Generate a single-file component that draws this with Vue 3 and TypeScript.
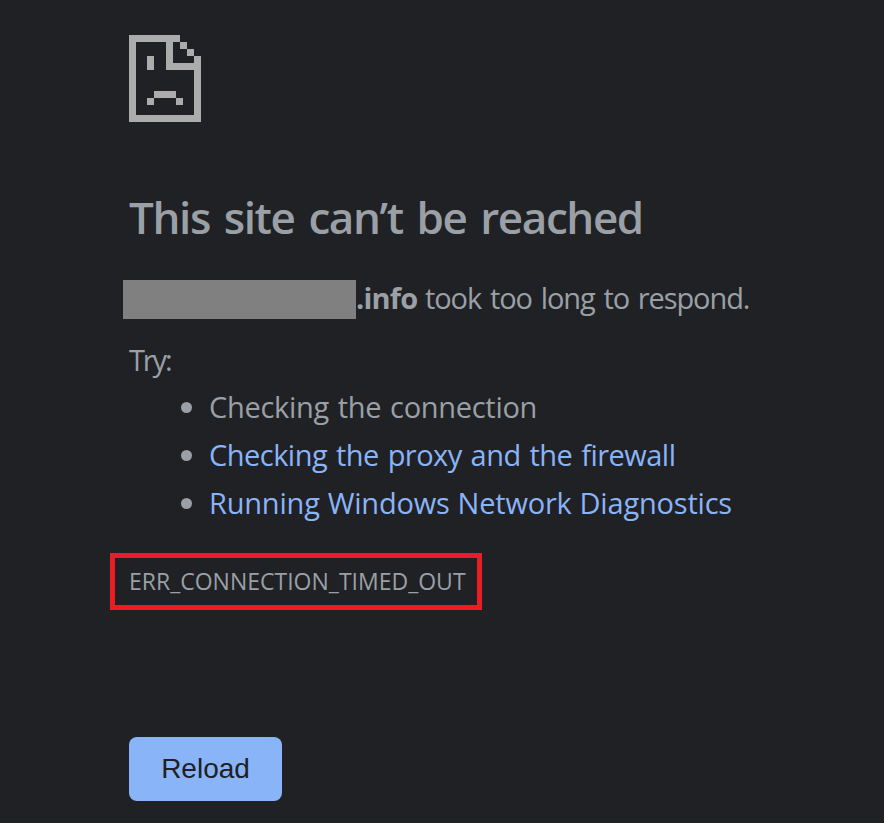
<script setup lang="ts">
interface Suggestion {
  text: string
  link: boolean
  size: string
}

const suggestions: Suggestion[] = [
  { text: 'Checking the connection', link: false, size: 'connection' },
  { text: 'Checking the proxy and the firewall', link: true, size: 'proxy' },
  { text: 'Running Windows Network Diagnostics', link: true, size: 'diagnostics' },
]

const reload = (): void => window.location.reload()
</script>

<template>
  <main class="page">
    <svg class="sad-file" width="72" height="87" viewBox="0 0 72 87" shape-rendering="crispEdges" aria-hidden="true">
      <path
        fill="#acacac"
        d="M0 0H51V7H44V28H65V21H72V87H0ZM7 7V80H65V35H37V7ZM51 7H58V14H51ZM58 14H65V21H58ZM18 21H25V35H18ZM25 56H47V63H25ZM18 63H25V70H18ZM47 63H54V70H47Z"
      />
    </svg>
    <h1 class="title">This site can’t be reached</h1>
    <p class="summary">
      <span class="redacted"></span><strong class="host">.info</strong><span class="reason">took too long to respond.</span>
    </p>
    <p class="try">Try:</p>
    <ul class="suggestions">
      <li v-for="item in suggestions" :key="item.text">
        <a v-if="item.link" href="#" :class="item.size">{{ item.text }}</a>
        <span v-else :class="item.size">{{ item.text }}</span>
      </li>
    </ul>
    <div class="error-code"><span>ERR_CONNECTION_TIMED_OUT</span></div>
    <button class="reload" type="button" @click="reload">Reload</button>
  </main>
</template>

<style>
body {
  margin: 0;
  background: #202124;
}
</style>

<style scoped>
.page {
  box-sizing: border-box;
  width: 884px;
  height: 823px;
  padding: 35px 0 0 129px;
  overflow: hidden;
  display: flex;
  flex-direction: column;
  align-items: flex-start;
  background: #202124;
  color: #9aa0a6;
  font-family: 'Open Sans', 'Noto Sans', sans-serif;
  font-size: 29px;
  white-space: nowrap;
}
.sad-file {
  display: block;
  flex: none;
}
.title {
  margin: 65px 0 0;
  height: 60px;
  line-height: 60px;
  font-size: 44px;
  font-weight: 600;
  letter-spacing: -1.4px;
  word-spacing: 3.8px;
}
.summary {
  display: flex;
  margin: 33px 0 0 -6px;
  height: 39px;
  line-height: 36px;
}
.redacted {
  width: 233px;
  height: 39px;
  background: #808080;
}
.host {
  width: 69px;
  font-weight: 700;
  letter-spacing: -0.8px;
}
.reason {
  letter-spacing: -1.1px;
  word-spacing: 2.4px;
}
.try {
  margin: 21px 0 0;
  height: 40px;
  line-height: 40px;
  letter-spacing: -2.1px;
}
.suggestions {
  margin: 3px 0 0;
  padding: 0;
  list-style: none;
}
.suggestions li {
  display: flex;
  align-items: center;
  height: 48px;
  line-height: 48px;
  padding-left: 52px;
}
.suggestions li::before {
  content: '';
  width: 11px;
  height: 11px;
  margin-right: 17px;
  border-radius: 50%;
  background: #9aa0a6;
}
.suggestions a {
  color: #8ab4f8;
  text-decoration: none;
}
.connection {
  letter-spacing: -0.3px;
  word-spacing: 1.6px;
}
.suggestions .proxy {
  letter-spacing: -0.52px;
  word-spacing: 1.8px;
}
.suggestions .diagnostics {
  letter-spacing: -0.2px;
  word-spacing: 0.6px;
}
.error-code {
  box-sizing: border-box;
  width: 372px;
  height: 57px;
  margin: 26px 0 0 -19px;
  padding-left: 14px;
  border: 5px solid #ed1c24;
  line-height: 46px;
  font-size: 23px;
}
.reload {
  width: 153px;
  height: 64px;
  margin: 127px 0 0;
  padding: 0;
  border: 0;
  border-radius: 8px;
  background: #8ab4f8;
  color: #202124;
  font-family: 'Liberation Sans', Arial, sans-serif;
  font-size: 28px;
  line-height: 64px;
}
</style>
